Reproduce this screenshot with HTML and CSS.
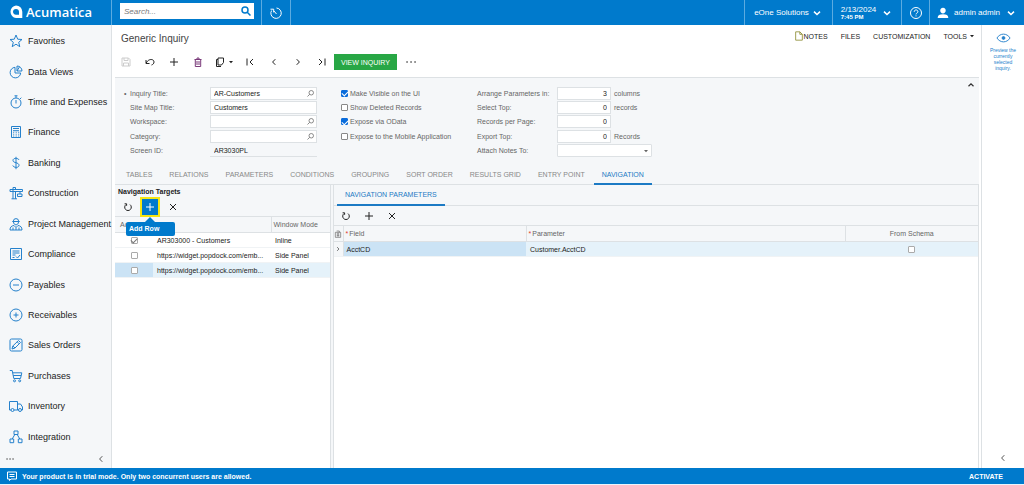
FILE: index.html
```html
<!DOCTYPE html>
<html lang="en">

<head>
    <meta charset="UTF-8">
    <meta name="viewport" content="width=device-width, initial-scale=1.0">
    <title>Generic Inquiry</title>
    <link rel="stylesheet" href="styles.css">
</head>

<body>

    <!-- Shared icons -->
    <svg class="sprite" aria-hidden="true">
        <symbol id="i-plus" viewBox="0 0 12 12"><path d="M6 2v8M2 6h8" /></symbol>
        <symbol id="i-close" viewBox="0 0 12 12"><path d="M3 3l6 6M9 3l-6 6" /></symbol>
        <symbol id="i-refresh" viewBox="0 0 12 12"><path d="M4 3.6A3.3 3.3 0 1 0 8 3.6M2.600 2.800h2v2" /></symbol>
        <symbol id="i-left" viewBox="0 0 12 12"><path d="M7.3 3.2L4.6 6l2.7 2.8" /></symbol>
        <symbol id="i-right" viewBox="0 0 12 12"><path d="M4.7 3.2L7.4 6l-2.7 2.8" /></symbol>
        <symbol id="i-down" viewBox="0 0 12 12"><path d="M3 4.6L6 7.5l3-2.9" /></symbol>
        <symbol id="i-search" viewBox="0 0 12 12"><circle cx="5" cy="5" r="3" /><path d="M7.2 7.2L10.5 10.5" /></symbol>
        <symbol id="i-lookup" viewBox="0 0 12 12"><circle cx="7" cy="5" r="3" /><path d="M4.8 7.2L2 10" /></symbol>
        <symbol id="i-caret" viewBox="0 0 12 12"><path d="M2 4h8L6 8.5z" fill="currentColor" stroke="none" /></symbol>
    </svg>

    <!-- Top bar -->
    <header class="topbar">
        <a class="logo" href="#">
            <svg viewBox="0 0 14 14"><path fill="#fff" stroke="none" fill-rule="evenodd" d="M7 .5a6.300 6.300 0 0 1 6.300 6.300V13H7A6.300 6.300 0 0 1 7 .5zM7 4C5 4 4 5.300 4 6.800s1 3 3 3h3v-3C10 5.300 9 4 7 4z" /></svg>
            <span>Acumatica</span>
        </a>
        <div class="search">
            <input type="text" aria-label="Search" placeholder="Search...">
            <button aria-label="Run search"><svg><use href="#i-search" /></svg></button>
        </div>
        <button class="top-item history" aria-label="History">
            <svg viewBox="0 0 14 14"><path d="M7.500 2A5.200 5.200 0 1 1 2.600 4.500M1.500 3.200h3.200v3.200M7.500 8L5 5" /></svg>
        </button>
        <button class="top-item company">eOne Solutions <svg><use href="#i-down" /></svg></button>
        <button class="top-item date">
            <span>2/13/2024<b>7:45 PM</b></span>
            <svg><use href="#i-down" /></svg>
        </button>
        <button class="top-item help" aria-label="Help">
            <svg viewBox="0 0 14 14"><circle cx="7" cy="7" r="5.500" /><path d="M5.200 5.800c0-2.500 3.700-2.500 3.700 0C8.900 7 7 7 7 8.400M7 9.400v1" /></svg>
        </button>
        <button class="top-item user">
            <svg class="person" viewBox="0 0 14 14"><path fill="#fff" stroke="none" d="M7 .8c4.500 0 4 6.700 0 6.700s-4.500-6.700 0-6.700zM.8 12.800c0-3.300 2-4.300 6.200-4.300s6.200 1 6.200 4.300z" /></svg>
            admin admin
            <svg><use href="#i-down" /></svg>
        </button>
    </header>

    <div class="workspace">

        <!-- Left menu -->
        <nav class="sidebar">
            <a href="#"><svg viewBox="0 0 14 14"><path d="M7 1l1.700 4.200 4.300.3-3.300 2.800 1.100 4.400L7 10.200l-3.800 2.500 1.100-4.400L1 5.500l4.300-.3z" /></svg>Favorites</a>
            <a href="#"><svg viewBox="0 0 14 14"><path d="M6 2.300A5.300 5.300 0 1 0 11.700 8H6zM8 1v5h5a5 5 0 0 0-5-5zM8 6l2.500-4.200" /></svg>Data Views</a>
            <a href="#"><svg viewBox="0 0 14 14"><circle cx="7" cy="8" r="5" /><path d="M5.500.8h3M7 .8V3M7 5v3.500M11 4l1.300-1.300" /></svg>Time and Expenses</a>
            <a href="#"><svg viewBox="0 0 14 14"><path d="M2.500 1.500h9v11h-9zM4 3.500h6M4 5.700h6" /><path stroke-dasharray="1 1.500" d="M4.200 7.300h6M4.200 9.200h6M4.200 11h6" /></svg>Finance</a>
            <a href="#"><svg viewBox="0 0 14 14"><path d="M10 4C9.500 2 4 1.500 4 4.400 4 7.400 10 6 10 9.300c0 3-5.500 2.500-6.200.2M7 .8v12.400" /></svg>Banking</a>
            <a href="#"><svg viewBox="0 0 14 14"><path d="M1 3.500h12.500v2H1zM4 1.500h2.500v2M4 1.500v11.300M6.500 5.500v7.300M2.500 12.800H8M11 5.500V8M8.500 8h4.500v2.500H8.500z" /></svg>Construction</a>
            <a href="#"><svg viewBox="0 0 14 14"><path d="M4.300 4.500a2.700 2.900 0 0 1 5.400 0zM3.300 4.500h7.400M4.500 4.800c0 4 5 4 5 0M1 13c0-3 1.500-4.200 4-4.500l2 2 2-2c2.500.3 4 1.500 4 4.500zM7 10.500V13M4 10.500V13M10 10.500V13" /></svg>Project Management</a>
            <a href="#"><svg viewBox="0 0 14 14"><path d="M1.500 1.500h11v11h-11zM3.500 4h7M3.500 6h7M3.500 8h3M3.500 10.500h2M7 9.500l1.500 1.500L11 8" /></svg>Compliance</a>
            <a href="#"><svg viewBox="0 0 14 14"><circle cx="7" cy="7" r="6" /><path d="M4 7h6" /></svg>Payables</a>
            <a href="#"><svg viewBox="0 0 14 14"><circle cx="7" cy="7" r="6" /><path d="M4.500 7h5M7 4.500v5" /></svg>Receivables</a>
            <a href="#"><svg viewBox="0 0 14 14"><rect x="1" y="1" width="12" height="12" rx="1.500" /><path d="M3 11l.8-3L9.500 2.500l2 2L6 10zM8.200 3.800l2 2M3.800 8L6 10" /></svg>Sales Orders</a>
            <a href="#"><svg viewBox="0 0 14 14"><path d="M.8 1.500h2.400l1.600 8h6.700L12.800 3.800H3.700M4.200 6.500h8" /><circle cx="5.500" cy="11.800" r="1" /><circle cx="10.700" cy="11.800" r="1" /></svg>Purchases</a>
            <a href="#"><svg viewBox="0 0 14 14"><path d="M2 11H.5V2.500h8V11H5M8.500 5h3l2 3v3h-1M9.500 11h-1" /><circle cx="3.500" cy="11" r="1.500" /><circle cx="11" cy="11" r="1.500" /></svg>Inventory</a>
            <a href="#"><svg viewBox="0 0 14 14"><path d="M5 1h4v3.500H5zM1 9h3.700v3.700H1zM9.300 9H13v3.700H9.300zM5.800 4.500L3.200 9M8.200 4.500L10.800 9" /></svg>Integration</a>
            <div class="sidebar-foot">
                <button aria-label="More items"><svg viewBox="0 0 12 12"><path class="dots" d="M3 6h.1M6 6h.1M9 6h.1" /></svg></button>
                <button aria-label="Collapse menu"><svg><use href="#i-left" /></svg></button>
            </div>
        </nav>

        <main class="content">
            <div class="title-row">
                <h1>Generic Inquiry</h1>
                <div class="title-links">
                    <button><svg class="note" viewBox="0 0 12 12"><path d="M2 1h5l3 3v7H2zM7 1v3h3" /></svg>NOTES</button>
                    <button>FILES</button>
                    <button>CUSTOMIZATION</button>
                    <button>TOOLS <svg class="caret"><use href="#i-caret" /></svg></button>
                </div>
            </div>

            <div class="toolbar">
                <button aria-label="Save" disabled><svg viewBox="0 0 12 12"><path d="M2 2h6.500L10 3.500V10H2zM4 2v2.500h4V2M3.500 10V7h5v3" /></svg></button>
                <button aria-label="Undo"><svg viewBox="0 0 12 12"><path d="M2 4v3.500h3.500M2.200 7.200C4 2.500 10 2.500 10 6c0 1.500-1 2.500-2.500 3" /></svg></button>
                <button aria-label="Add"><svg><use href="#i-plus" /></svg></button>
                <button aria-label="Delete"><svg class="trash" viewBox="0 0 12 12"><path d="M2.500 3.500h7M5 3.200V2h2v1.200M3.300 3.500V10.500h5.400V3.500M5 5v4M7 5v4" /></svg></button>
                <button class="wide" aria-label="Copy"><svg viewBox="0 0 12 12"><path d="M4 3.500H2.500v7H7M4 2h5.500v4.500L7.500 9H4z" /></svg><svg class="caret"><use href="#i-caret" /></svg></button>
                <button aria-label="First"><svg viewBox="0 0 12 12"><path d="M3 2.500v7M9 3L6 6l3 3" /></svg></button>
                <button aria-label="Previous"><svg><use href="#i-left" /></svg></button>
                <button aria-label="Next"><svg><use href="#i-right" /></svg></button>
                <button aria-label="Last"><svg viewBox="0 0 12 12"><path d="M9 2.500v7M3 3l3 3-3 3" /></svg></button>
                <button class="view-inquiry">VIEW INQUIRY</button>
                <button aria-label="More actions"><svg viewBox="0 0 12 12"><path class="dots" d="M2 6h.1M6 6h.1M10 6h.1" /></svg></button>
            </div>

            <div class="screen">

                <!-- Summary form -->
                <form class="summary">
                    <div class="fields main-fields">
                        <label class="required" for="title">Inquiry Title:</label>
                        <div class="lookup"><input type="text" id="title" value="AR-Customers"><svg><use href="#i-lookup" /></svg></div>
                        <label for="site-title">Site Map Title:</label>
                        <input type="text" id="site-title" value="Customers">
                        <label for="workspace">Workspace:</label>
                        <div class="lookup"><input type="text" id="workspace"><svg><use href="#i-lookup" /></svg></div>
                        <label for="category">Category:</label>
                        <div class="lookup"><input type="text" id="category"><svg><use href="#i-lookup" /></svg></div>
                        <label for="screen-id">Screen ID:</label>
                        <input type="text" id="screen-id" class="readonly" value="AR3030PL" readonly>
                    </div>
                    <div class="fields checks">
                        <label><input type="checkbox" checked>Make Visible on the UI</label>
                        <label><input type="checkbox">Show Deleted Records</label>
                        <label><input type="checkbox" checked>Expose via OData</label>
                        <label><input type="checkbox">Expose to the Mobile Application</label>
                    </div>
                    <div class="fields limits">
                        <label for="columns">Arrange Parameters in:</label>
                        <div><input type="text" id="columns" value="3"><span>columns</span></div>
                        <label for="top">Select Top:</label>
                        <div><input type="text" id="top" value="0"><span>records</span></div>
                        <label for="per-page">Records per Page:</label>
                        <div><input type="text" id="per-page" value="0"></div>
                        <label for="export">Export Top:</label>
                        <div><input type="text" id="export" value="0"><span>Records</span></div>
                        <label for="notes-to">Attach Notes To:</label>
                        <div class="dropdown"><select id="notes-to"><option></option></select><svg class="caret"><use href="#i-caret" /></svg></div>
                    </div>
                    <button type="button" class="collapse" aria-label="Collapse form"><svg viewBox="0 0 12 12"><path d="M3 7.500L6 4.700l3 2.800" /></svg></button>
                </form>

                <div class="tabs">
                    <button>TABLES</button>
                    <button>RELATIONS</button>
                    <button>PARAMETERS</button>
                    <button>CONDITIONS</button>
                    <button>GROUPING</button>
                    <button>SORT ORDER</button>
                    <button>RESULTS GRID</button>
                    <button>ENTRY POINT</button>
                    <button class="active">NAVIGATION</button>
                </div>

                <div class="split">

                    <!-- Navigation targets -->
                    <section class="targets">
                        <h2>Navigation Targets</h2>
                        <div class="grid-tools">
                            <button aria-label="Refresh"><svg><use href="#i-refresh" /></svg></button>
                            <div class="add-wrap">
                                <button class="add" aria-label="Add Row"><svg><use href="#i-plus" /></svg></button>
                                <div class="tooltip">Add Row</div>
                            </div>
                            <button aria-label="Delete Row"><svg><use href="#i-close" /></svg></button>
                        </div>
                        <table>
                            <colgroup><col class="col-active"><col><col class="col-mode"></colgroup>
                            <thead>
                                <tr><th class="first">Active</th><th class="first"></th><th>Window Mode</th></tr>
                            </thead>
                            <tbody>
                                <tr><td class="check"><input type="checkbox" class="flat" aria-label="Active" checked></td><td>AR303000 - Customers</td><td>Inline</td></tr>
                                <tr><td class="check"><input type="checkbox" class="flat" aria-label="Active"></td><td>https://widget.popdock.com/emb...</td><td>Side Panel</td></tr>
                                <tr class="selected"><td class="check current"><input type="checkbox" class="flat" aria-label="Active"></td><td>https://widget.popdock.com/emb...</td><td>Side Panel</td></tr>
                            </tbody>
                        </table>
                    </section>

                    <!-- Navigation parameters -->
                    <section class="params">
                        <div class="tabs subtabs"><button class="active">NAVIGATION PARAMETERS</button></div>
                        <div class="grid-tools">
                            <button aria-label="Refresh"><svg><use href="#i-refresh" /></svg></button>
                            <button aria-label="Add"><svg><use href="#i-plus" /></svg></button>
                            <button aria-label="Delete"><svg><use href="#i-close" /></svg></button>
                        </div>
                        <table>
                            <colgroup><col class="col-mark"><col class="col-field"><col><col class="col-schema"></colgroup>
                            <thead>
                                <tr>
                                    <th class="mark"><svg viewBox="0 0 12 12"><path d="M2 3.500h8V11H2zM4 1.500h4v2M4 6h4M4 8.500h4M6 4v6" /></svg></th>
                                    <th><i>*</i>Field</th>
                                    <th><i>*</i>Parameter</th>
                                    <th class="center">From Schema</th>
                                </tr>
                            </thead>
                            <tbody>
                                <tr class="selected">
                                    <td class="mark"><svg class="row-arrow"><use href="#i-right" /></svg></td>
                                    <td class="current">AcctCD</td>
                                    <td>Customer.AcctCD</td>
                                    <td><input type="checkbox" class="flat" aria-label="From Schema"></td>
                                </tr>
                            </tbody>
                        </table>
                    </section>
                </div>
            </div>
        </main>

        <!-- Side panel -->
        <aside class="side-panel">
            <button class="preview">
                <svg viewBox="0 0 16 12"><path d="M1 6c3.500-5.500 10.500-5.500 14 0-3.500 5.500-10.500 5.500-14 0z" /><circle cx="8" cy="6" r="1.500" fill="currentColor" /></svg>
                Preview the currently selected inquiry.
            </button>
            <button class="expand" aria-label="Expand panel"><svg><use href="#i-left" /></svg></button>
        </aside>
    </div>

    <footer class="trial">
        <svg viewBox="0 0 12 12"><path d="M1.500 2h9v7H5l-1.500 1.500V9h-2zM3.500 4.500h5M3.500 6.500h5" /></svg>
        <span>Your product is in trial mode. Only two concurrent users are allowed.</span>
        <a href="#">ACTIVATE</a>
    </footer>

</body>

</html>
```
FILE: styles.css
```css
* {
    box-sizing: border-box;
}

body {
    margin: 0;
    height: 100vh;
    display: flex;
    flex-direction: column;
    font-family: "Liberation Sans", Arial, sans-serif;
    font-size: 7px;
    color: #222;
    background: #fff;
    border-bottom: 1px solid #eaf5fc;
}

button {
    padding: 0;
    border: none;
    background: none;
    font: inherit;
    color: inherit;
    cursor: pointer;
    display: flex;
    align-items: center;
    justify-content: center;
}

a {
    color: inherit;
    text-decoration: none;
}

svg {
    width: 12px;
    height: 12px;
    fill: none;
    stroke: currentColor;
    flex-shrink: 0;
}

.sprite {
    position: absolute;
    width: 0;
    height: 0;
}

.caret {
    width: 6px;
    height: 6px;
}

.dots {
    stroke-width: 1.5;
    stroke-linecap: round;
}

/* Top bar */
.topbar {
    display: flex;
    height: 25px;
    flex-shrink: 0;
    background: #007acc;
    color: #fff;
    font-size: 8px;
}

.logo {
    width: 112px;
    display: flex;
    align-items: center;
    gap: 3px;
    padding: 0 0 2px 9px;
    border-right: 1px solid #5cabe0;
    font-family: "Open Sans", sans-serif;
    font-size: 13px;
    font-weight: 600;
}

.logo svg {
    width: 14px;
    height: 14px;
}

.search {
    display: flex;
    width: 134px;
    height: 16px;
    margin: 3px 7px 0 8px;
    background: #fff;
}

.search input {
    flex: 1;
    min-width: 0;
    padding: 0 4px;
    border: none;
    background: none;
    font: inherit;
}

.search input::placeholder {
    color: #777;
    font-style: italic;
}

.search button {
    width: 16px;
    color: #007acc;
}

.search svg {
    stroke-width: 1.5;
}

.top-item {
    border-left: 1px solid #5cabe0;
}

.top-item svg {
    stroke-width: 1.5;
}

.history {
    width: 30px;
    border-right: 1px solid #5cabe0;
    margin-right: auto;
}

.history svg,
.help svg {
    width: 14px;
    height: 14px;
    stroke-width: 1;
}

.company {
    width: 88px;
    gap: 2px;
}

.date {
    width: 69px;
    gap: 5px;
    text-align: left;
}

.date b {
    display: block;
    font-size: 6px;
}

.help {
    width: 28px;
}

.user {
    width: 95px;
    gap: 5px;
}

/* Page body */
.workspace {
    flex: 1;
    min-height: 0;
    display: flex;
}

.sidebar {
    width: 112px;
    flex-shrink: 0;
    display: flex;
    flex-direction: column;
    padding-top: 1px;
    background: #f5f7f9;
    border-right: 1px solid #dde1e4;
    font-size: 9px;
}

.sidebar a {
    flex: 1;
    display: flex;
    align-items: center;
    gap: 5px;
    padding-left: 9px;
    white-space: nowrap;
}

.sidebar a svg {
    width: 14px;
    height: 14px;
    color: #2581cc;
}

.sidebar-foot {
    height: 16px;
    display: flex;
    justify-content: space-between;
    padding: 0 4px 1px;
    color: #555;
}

.content {
    flex: 1;
    min-width: 0;
    display: flex;
    flex-direction: column;
    padding: 0 2px;
}

.title-row {
    display: flex;
    justify-content: space-between;
    height: 24px;
    padding: 0 4px 0 7px;
}

.title-row h1 {
    margin: 8px 0 0;
    font-size: 10px;
    line-height: 12px;
    font-weight: normal;
    color: #444;
}

.title-links {
    display: flex;
    align-items: center;
    gap: 13px;
    padding-bottom: 2px;
}

.title-links .caret {
    margin-left: 2px;
}

.title-links .note {
    width: 10px;
    height: 10px;
    color: #8a8a30;
}

.toolbar {
    display: flex;
    align-items: center;
    height: 28px;
    padding-bottom: 2px;
}

.toolbar button {
    width: 24px;
    height: 16px;
}

.toolbar button:disabled {
    color: #ccc;
}

.toolbar .wide {
    width: 28px;
    gap: 2px;
}

.toolbar .trash {
    color: #7a3b7a;
}

.toolbar .view-inquiry {
    width: auto;
    padding: 0 7px;
    margin-right: 2px;
    background: #28a745;
    color: #fff;
}

.screen {
    flex: 1;
    min-height: 0;
    display: flex;
    flex-direction: column;
    margin-left: 1px;
    border-top: 1px solid #dde1e4;
}

/* Summary form */
.summary {
    display: flex;
    padding: 8px 3px 7px 9px;
    background: #f5f7f9;
    color: #666;
}

.fields {
    display: grid;
    grid-template-rows: repeat(5, 1fr);
    align-items: center;
    height: 72px;
}

.main-fields {
    grid-template-columns: 86px 107px;
    margin-right: 24px;
}

.main-fields label {
    padding-left: 6px;
}

.main-fields .required {
    padding-left: 0;
}

.required::before {
    content: "•";
    display: inline-block;
    width: 6px;
}

.fields input[type="text"],
.fields select {
    width: 100%;
    height: 13px;
    padding: 0 3px;
    border: 1px solid #dde1e4;
    background: #fff;
    font: inherit;
    color: #222;
}

.fields input.readonly[type="text"] {
    border-width: 0 0 1px;
    padding-left: 4px;
    background: none;
}

.lookup {
    display: flex;
    align-items: center;
    background: #fff;
    border: 1px solid #dde1e4;
    height: 13px;
}

.fields .lookup input[type="text"] {
    height: 11px;
    border: none;
    background: none;
}

.lookup svg {
    width: 9px;
    height: 9px;
    margin-right: 1px;
}

.checks {
    width: 112px;
    margin-right: 24px;
}

.checks label {
    display: flex;
    align-items: center;
    gap: 2px;
    white-space: nowrap;
}

input[type="checkbox"] {
    appearance: none;
    width: 7px;
    height: 7px;
    margin: 0;
    border: 1px solid #888;
    border-radius: 1px;
    background: #fff;
    display: flex;
    align-items: center;
    justify-content: center;
}

input[type="checkbox"]:checked {
    background: #0a6cdb;
    border-color: #0a6cdb;
}

input[type="checkbox"]:checked::after {
    content: "";
    width: 3px;
    height: 5px;
    border: solid #fff;
    border-width: 0 1px 1px 0;
    transform: rotate(45deg);
}

input[type="checkbox"].flat {
    border-color: #aaa;
    background: #fff;
    margin: 0 auto;
}

input[type="checkbox"].flat:checked::after {
    border-color: #777;
}

.limits {
    grid-template-columns: 80px 100px;
}

.limits div {
    display: flex;
    align-items: center;
    gap: 3px;
}

.limits input[type="text"] {
    width: 54px;
    text-align: right;
}

.limits .dropdown {
    width: 95px;
    position: relative;
}

.dropdown select {
    appearance: none;
    border-radius: 1px;
}

/* arrow lies over the select */
.dropdown .caret {
    position: absolute;
    right: 3px;
    pointer-events: none;
}

.collapse {
    width: 10px;
    height: 8px;
    margin-left: auto;
    margin-top: -5px;
    color: #333;
}

.collapse svg {
    width: 10px;
    height: 10px;
    stroke-width: 1.5;
}

/* Tabs */
.tabs {
    display: flex;
    height: 20px;
    flex-shrink: 0;
    gap: 1px;
    padding-left: 3px;
    background: #f5f7f9;
    border-bottom: 1px solid #dde1e4;
    color: #888;
}

.tabs button {
    padding: 0 8px;
    border-bottom: 2px solid transparent;
    margin-bottom: -1px;
}

.tabs .active {
    color: #1c7ac4;
    border-bottom-color: #1c7ac4;
}

.subtabs {
    height: 21px;
}

/* Grids */
.split {
    flex: 1;
    min-height: 0;
    display: flex;
    gap: 2px;
    background: #f5f7f9;
}

.targets,
.params {
    background: linear-gradient(#f5f7f9 40px, #fff 40px);
    border-right: 1px solid #dde1e4;
}

.targets {
    width: 216px;
}

.params {
    flex: 1;
    min-width: 0;
    border-left: 1px solid #dde1e4;
}

.targets h2 {
    margin: 0;
    padding: 2px 3px 0;
    font-size: 7px;
    line-height: 10px;
}

.grid-tools {
    display: flex;
    align-items: center;
    height: 19px;
}

.grid-tools button {
    width: 23px;
    height: 16px;
}

.add-wrap {
    position: relative;
    border: 2px solid #f5e614;
}

.grid-tools .add {
    width: 16px;
    background: #007acc;
    color: #fff;
}

.targets .grid-tools > button {
    width: 25px;
}

/* tooltip lies over the grid header */
.tooltip {
    position: absolute;
    z-index: 1;
    top: 23px;
    left: -16px;
    width: 49px;
    height: 14px;
    padding: 0 3px;
    line-height: 14px;
    border-radius: 2px;
    background: #007acc;
    color: #fff;
    font-weight: bold;
}

.tooltip::before {
    content: "";
    position: absolute;
    left: 18px;
    top: -5px;
    border: solid transparent;
    border-width: 0 6px 6px;
    border-bottom-color: #007acc;
}

table {
    width: 100%;
    table-layout: fixed;
    border-collapse: collapse;
}

th {
    height: 16px;
    padding: 0 2px;
    border: 1px solid #dde1e4;
    border-width: 1px 1px 1px 0;
    background: #f5f7f9;
    color: #666;
    font-weight: normal;
    text-align: left;
    white-space: nowrap;
}

th:first-child {
    padding-left: 5px;
}

.targets th:first-child,
th:last-child {
    border-right: none;
}

th i {
    color: #e03c31;
    margin-right: 1px;
    font-style: normal;
}

td {
    height: 15px;
    padding: 0 4px;
    background: #fff;
    border-bottom: 1px solid #f0f3f5;
    white-space: nowrap;
    overflow: hidden;
}

.selected td {
    background: #e5f2fa;
}

.selected .current {
    background: #cbe3f5;
}

.params .current {
    padding-left: 3px;
}

.selected .mark {
    background: #f5f7f9;
    border-right: 1px solid #dde1e4;
}

.params .mark {
    padding: 0;
}

.mark svg {
    display: block;
    width: 8px;
    height: 8px;
}

.mark .row-arrow {
    height: 12px;
    color: #333;
}

th.center {
    text-align: center;
}

.col-active {
    width: 38px;
}

.col-mode {
    width: 59px;
}

.col-mark {
    width: 9px;
}

.col-field {
    width: 183px;
}

.col-schema {
    width: 133px;
}

/* Side panel */
.side-panel {
    width: 43px;
    flex-shrink: 0;
    display: flex;
    flex-direction: column;
    justify-content: space-between;
    align-items: center;
    padding: 7px 5px 4px;
    border-left: 1px solid #dde1e4;
}

.preview {
    flex-direction: column;
    gap: 3px;
    font-size: 5px;
    line-height: 6px;
    color: #2581cc;
}

.preview svg {
    width: 15px;
    height: 12px;
}

.expand {
    color: #555;
}

/* Trial bar */
.trial {
    display: flex;
    align-items: center;
    gap: 4px;
    height: 16px;
    flex-shrink: 0;
    padding: 0 21px 0 6px;
    background: #007acc;
    color: #fff;
    font-weight: bold;
}

.trial a {
    margin-left: auto;
}
```
